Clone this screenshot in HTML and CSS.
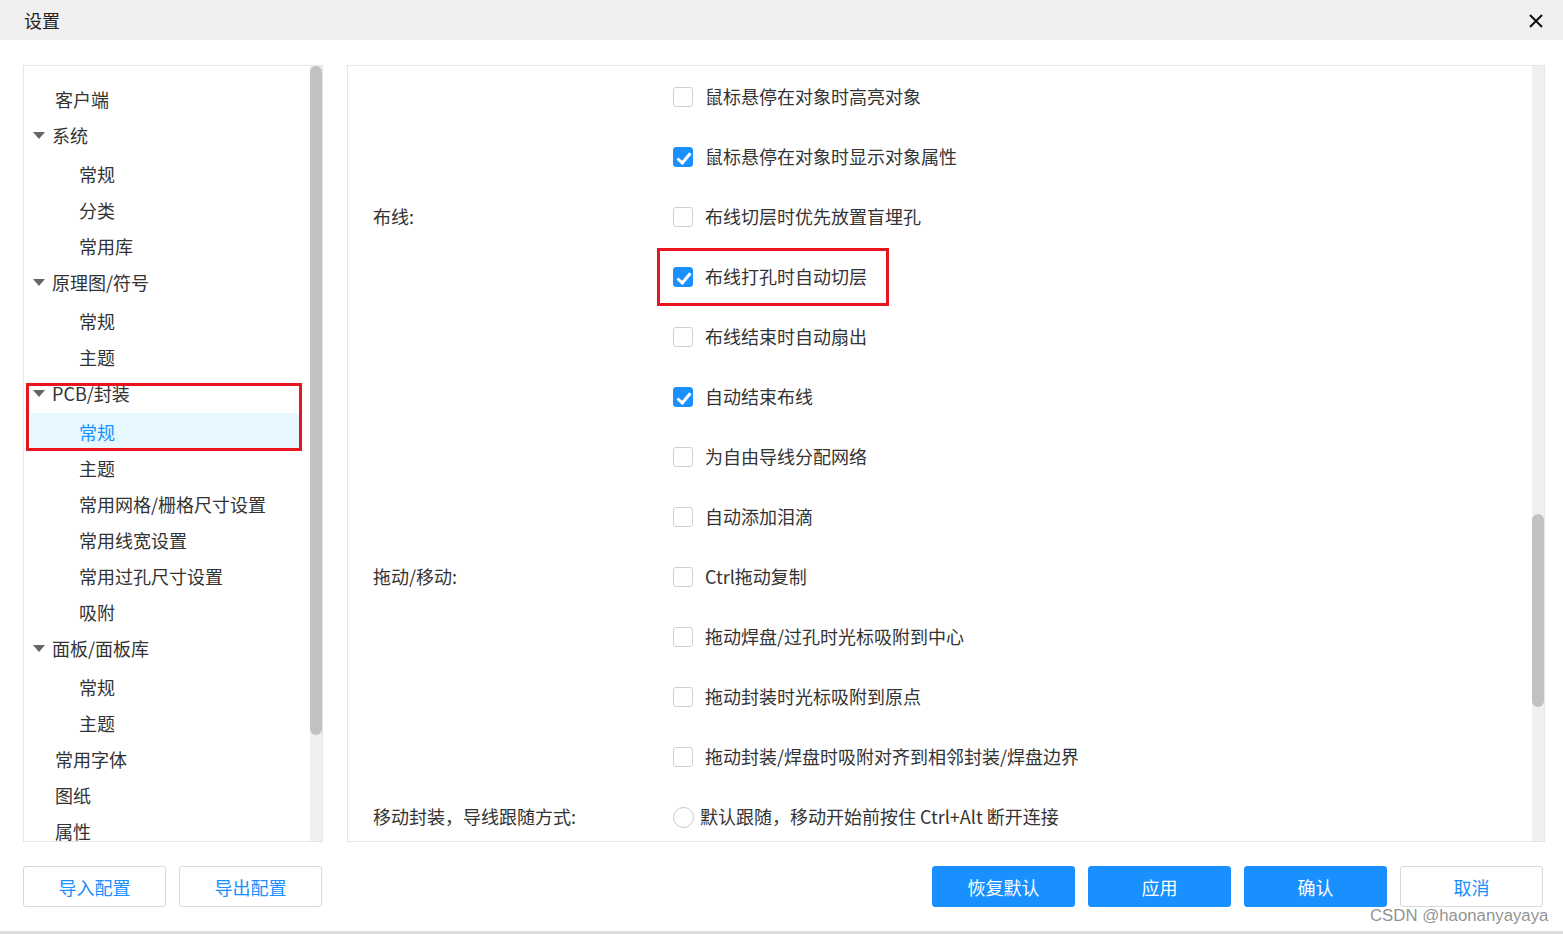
FILE: index.html
```html
<!DOCTYPE html>
<html lang="zh-CN">
<head>
  <meta charset="UTF-8" />
  <meta name="viewport" content="width=device-width, initial-scale=1.0"/>
  <title>设置</title>
  <link rel="stylesheet" href="styles.css">
</head>
<body>
  <div class="titlebar">
    <span class="title">设置</span>
    <span class="close">
      <svg width="14" height="14" viewBox="0 0 14 14"><path d="M1 1 L13 13 M13 1 L1 13" stroke="#111" stroke-width="2" fill="none"/></svg>
    </span>
  </div>

  <div class="main">
    <!-- left tree -->
    <div class="panel tree-panel">
      <ul class="tree">
        <li class="node top">客户端</li>
        <li class="node parent"><i class="caret"></i>系统</li>
        <li>
          <ul class="children">
            <li class="node child">常规</li>
            <li class="node child">分类</li>
            <li class="node child">常用库</li>
          </ul>
        </li>
        <li class="node parent"><i class="caret"></i>原理图/符号</li>
        <li>
          <ul class="children">
            <li class="node child">常规</li>
            <li class="node child">主题</li>
          </ul>
        </li>
        <li class="node parent"><i class="caret"></i>PCB/封装</li>
        <li>
          <ul class="children">
            <li class="node child active">常规</li>
            <li class="node child">主题</li>
            <li class="node child">常用网格/栅格尺寸设置</li>
            <li class="node child">常用线宽设置</li>
            <li class="node child">常用过孔尺寸设置</li>
            <li class="node child">吸附</li>
          </ul>
        </li>
        <li class="node parent"><i class="caret"></i>面板/面板库</li>
        <li>
          <ul class="children">
            <li class="node child">常规</li>
            <li class="node child">主题</li>
          </ul>
        </li>
        <li class="node top">常用字体</li>
        <li class="node top">图纸</li>
        <li class="node top">属性</li>
      </ul>
      <div class="scrollbar"><div class="thumb" style="margin-top: 0; height: 669px;"></div></div>
    </div>

    <!-- right options -->
    <div class="panel form-panel">
      <div class="form">
        <div class="row"><span class="label"></span><span class="box"></span><span class="text">鼠标悬停在对象时高亮对象</span></div>
        <div class="row"><span class="label"></span><span class="box checked"></span><span class="text">鼠标悬停在对象时显示对象属性</span></div>
        <div class="row"><span class="label">布线:</span><span class="box"></span><span class="text">布线切层时优先放置盲埋孔</span></div>
        <div class="row"><span class="label"></span><span class="box checked"></span><span class="text">布线打孔时自动切层</span></div>
        <div class="row"><span class="label"></span><span class="box"></span><span class="text">布线结束时自动扇出</span></div>
        <div class="row"><span class="label"></span><span class="box checked"></span><span class="text">自动结束布线</span></div>
        <div class="row"><span class="label"></span><span class="box"></span><span class="text">为自由导线分配网络</span></div>
        <div class="row"><span class="label"></span><span class="box"></span><span class="text">自动添加泪滴</span></div>
        <div class="row"><span class="label">拖动/移动:</span><span class="box"></span><span class="text">Ctrl拖动复制</span></div>
        <div class="row"><span class="label"></span><span class="box"></span><span class="text">拖动焊盘/过孔时光标吸附到中心</span></div>
        <div class="row"><span class="label"></span><span class="box"></span><span class="text">拖动封装时光标吸附到原点</span></div>
        <div class="row"><span class="label"></span><span class="box"></span><span class="text">拖动封装/焊盘时吸附对齐到相邻封装/焊盘边界</span></div>
        <div class="row"><span class="label">移动封装，导线跟随方式:</span><span class="radio"></span><span class="text radio-text">默认跟随，移动开始前按住 Ctrl+Alt 断开连接</span></div>
      </div>
      <div class="scrollbar"><div class="thumb" style="margin-top: 448px; height: 193px;"></div></div>
    </div>
  </div>

  <div class="footer">
    <div class="btn-group">
      <button class="btn btn-plain">导入配置</button>
      <button class="btn btn-plain">导出配置</button>
    </div>
    <div class="btn-group right">
      <button class="btn btn-primary">恢复默认</button>
      <button class="btn btn-primary">应用</button>
      <button class="btn btn-primary">确认</button>
      <button class="btn btn-plain">取消</button>
    </div>
  </div>
  <div class="bottom-line"></div>

  <!-- annotation boxes -->
  <div class="mark mark-tree"></div>
  <div class="mark mark-option"></div>
  <div class="watermark">CSDN @haonanyayaya</div>
</body>
</html>
```

FILE: styles.css
```css
* {
  box-sizing: border-box;
}

body {
  margin: 0;
  width: 1563px;
  height: 934px;
  overflow: hidden;
  position: relative;
  font-family: "Noto Sans CJK SC", "Noto Sans", sans-serif;
  font-size: 18px;
  color: #333;
  background: #fff;
}

ul {
  list-style: none;
  margin: 0;
  padding: 0;
}

.titlebar {
  height: 40px;
  background: #f0f0f0;
  display: flex;
  align-items: center;
  justify-content: space-between;
  padding: 0 20px 0 24px;
}

.title {
  font-size: 18px;
  line-height: 40px;
  color: #222;
}

.close {
  display: flex;
  margin-top: 1px;
}

.main {
  display: flex;
  gap: 24px;
  padding: 25px 18px 0 23px;
  height: 802px;
}

.panel {
  border: 1px solid #e6e6e6;
  display: flex;
  overflow: hidden;
  height: 777px;
}

.tree-panel {
  width: 300px;
}

.form-panel {
  flex: 1;
}

.scrollbar {
  width: 12px;
  flex: none;
  background: #f0f0f0;
}

.thumb {
  width: 12px;
  border-radius: 6px;
  background: #c1c1c1;
}

/* tree */
.tree {
  flex: 1;
  padding: 15px 11px 0 7px;
}

.node {
  height: 36px;
  line-height: 36px;
  white-space: nowrap;
  display: flex;
  align-items: center;
}

.node.top {
  padding-left: 24px;
}

.node.child {
  padding-left: 48px;
  padding-top: 1px;
}

.node.active {
  background: #e6f7ff;
  color: #1890ff;
}

.children {
  padding: 2px 0 1px;
}

.caret {
  width: 0;
  height: 0;
  margin: 0 7px 0 2px;
  border-left: 6.5px solid transparent;
  border-right: 6.5px solid transparent;
  border-top: 7px solid #666;
}

/* options */
.form {
  flex: 1;
  padding-left: 25px;
}

.row {
  height: 60px;
  display: flex;
  align-items: center;
  white-space: nowrap;
}

.label {
  width: 300px;
  flex: none;
}

.box {
  width: 20px;
  height: 20px;
  flex: none;
  border: 1px solid #d0d0d0;
  border-radius: 3px;
  background: #fff;
  margin-top: 1px;
  position: relative;
}

.box.checked {
  background: #1890ff;
  border-color: #1890ff;
}

.box.checked::after {
  content: "";
  position: absolute;
  left: 6px;
  top: 2px;
  width: 5px;
  height: 11px;
  border: solid #fff;
  border-width: 0 3px 3px 0;
  transform: rotate(40deg);
}

.radio {
  width: 21px;
  height: 21px;
  flex: none;
  border: 1px solid #c8c8c8;
  border-radius: 50%;
  margin-top: 2px;
}

.text {
  margin-left: 12px;
}

.radio-text {
  margin-left: 6px;
}

/* footer */
.footer {
  display: flex;
  justify-content: space-between;
  padding: 24px 20px 0 23px;
  height: 89px;
}

.btn-group {
  display: flex;
  gap: 13px;
}

.btn {
  width: 143px;
  height: 41px;
  border-radius: 3px;
  font-family: inherit;
  font-size: 18px;
  cursor: pointer;
  padding: 0;
}

.btn-plain {
  background: #fff;
  border: 1px solid #d9d9d9;
  color: #1890ff;
}

.btn-primary {
  background: #1890ff;
  border: 1px solid #1890ff;
  color: #fff;
}

.bottom-line {
  height: 3px;
  background: #dcdcdc;
}

/* annotation overlays */
.mark {
  position: absolute;
  border: 3px solid #e8151f;
  pointer-events: none;
}

.mark-tree {
  left: 26px;
  top: 383px;
  width: 276px;
  height: 68px;
}

.mark-option {
  left: 657px;
  top: 248px;
  width: 232px;
  height: 58px;
}

.watermark {
  position: absolute;
  left: 1370px;
  top: 906px;
  font-family: "Liberation Sans", Arial, sans-serif;
  font-size: 16.8px;
  color: rgba(125, 125, 125, 0.85);
  text-shadow: 0 0 2px #fff;
}
```
